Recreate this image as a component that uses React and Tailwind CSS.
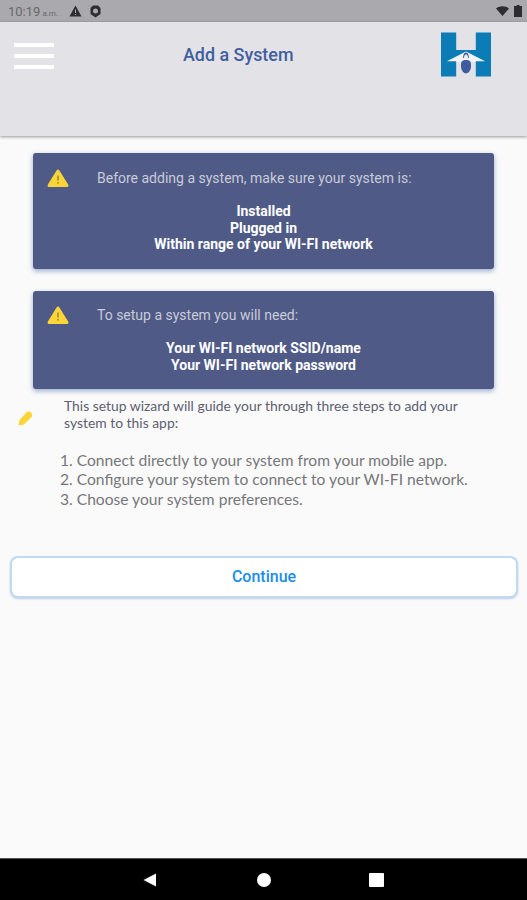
import React from 'react';

const WarningIcon = () => (
  <svg width="22" height="19" viewBox="0 0 22 19" className="shrink-0">
    <path d="M11 2 L20 16.5 H2 Z" fill="#fbd438" stroke="#fbd438" strokeWidth="3" strokeLinejoin="round" />
    <rect x="10.2" y="6.5" width="1.6" height="5" fill="#a08a3a" />
    <rect x="10.2" y="13" width="1.6" height="1.6" fill="#a08a3a" />
  </svg>
);

const Logo = () => (
  <svg width="50" height="45" viewBox="0 0 51 45">
    <path d="M0 0 H15.500 V18 H35.500 V0 H51 V45 H35.500 V29 H15.500 V45 H0 Z" fill="#0b7cb5" />
    <path d="M6 29.500 L25.500 19.500 L45 29.500 H35.500 V30 H15.500 V29.500 Z" fill="#f2f3f6" />
    <path d="M22.500 26 C22.500 22.500 24 20.500 25.500 20.500 C27 20.500 28.500 22.500 28.500 26 L27.500 26 C27.500 23.500 26.500 22.500 25.500 22.500 C24.500 22.500 23.500 23.500 23.500 26 Z" fill="#3f5c9e" />
    <path d="M21 30 C22 27.500 29 27.500 30 30 C31.500 34 30.500 41.500 25.500 42 C20.500 41.500 19.500 34 21 30 Z" fill="#3f5c9e" />
  </svg>
);

const InfoCard = ({ title, lines, className }) => (
  <div className={`mx-[33px] rounded-[3px] bg-[#4f5a86] shadow-[0_2px_5px_rgba(60,90,160,0.5)] ${className}`}>
    <div className="flex items-center pl-[14px]">
      <WarningIcon />
      <p className="ml-[28px] text-[14px] leading-[17px] text-[#c9cbd8]">{title}</p>
    </div>
    <div className="mt-[15px] text-center text-[14px] font-bold leading-[16.500px] text-white">
      {lines.map((line) => (
        <p key={line}>{line}</p>
      ))}
    </div>
  </div>
);

const steps = [
  '1. Connect directly to your system from your mobile app.',
  '2. Configure your system to connect to your WI-FI network.',
  '3. Choose your system preferences.',
];

export default function App() {
  return (
    <div className="flex h-[900px] w-[527px] flex-col overflow-hidden bg-[#fafafa] font-['Roboto',sans-serif]">
      {/* Status bar */}
      <div className="flex h-[22px] shrink-0 items-center justify-between bg-[#aaa9ad] pl-[8px] pr-[5px]">
        <div className="flex items-center">
          <span className="mt-[1px] text-[13px] text-[#68686c]">
            10:19<span className="ml-[2px] text-[8px]">a.m.</span>
          </span>
          <svg width="13" height="12" viewBox="0 0 13 12" className="ml-[11px]">
            <path d="M6.500 0.500 L12.500 11.500 H0.500 Z" fill="#2e2e30" />
            <rect x="6" y="4.500" width="1" height="3.500" fill="#aaa9ad" />
            <rect x="6" y="9" width="1" height="1" fill="#aaa9ad" />
          </svg>
          <svg width="11" height="13" viewBox="0 0 11 13" className="ml-[8px]">
            <path d="M3 0.500 H8 L10.500 3 V9 L5.500 12.500 L0.500 9 V3 Z" fill="#2e2e30" />
            <circle cx="5.500" cy="6" r="2.500" fill="#aaa9ad" />
          </svg>
        </div>
        <div className="flex items-center gap-[5px]">
          <svg width="13" height="10" viewBox="0 0 13 10">
            <path d="M0 2.500 C3.500 -0.500 9.500 -0.500 13 2.500 L6.500 10 Z" fill="#2e2e30" />
          </svg>
          <svg width="8" height="12" viewBox="0 0 8 12">
            <path d="M2.500 0 H5.500 V1 H8 V12 H0 V1 H2.500 Z" fill="#2e2e30" />
          </svg>
        </div>
      </div>

      {/* Header */}
      <div className="h-[114px] shrink-0 bg-[#e3e2e7] shadow-[0_1px_3px_rgba(0,0,0,0.4)]">
        <div className="flex items-start pl-[14px] pr-[36px] pt-[10px]">
          <div className="mt-[11px] flex w-[40px] flex-col gap-[7.500px]">
            <div className="h-[3.500px] bg-white" />
            <div className="h-[3.500px] bg-white" />
            <div className="h-[3.500px] bg-white" />
          </div>
          <h1 className="ml-[129px] mt-[12px] text-[17.900px] font-medium leading-[22px] text-[#3f5f9f]">Add a System</h1>
          <div className="ml-auto">
            <Logo />
          </div>
        </div>
      </div>

      {/* Content */}
      <div className="flex-1 pt-[17px]">
        <InfoCard
          className="h-[116px] pt-[16px]"
          title="Before adding a system, make sure your system is:"
          lines={['Installed', 'Plugged in', 'Within range of your WI-FI network']}
        />
        <InfoCard
          className="mt-[22px] h-[98px] pt-[15px]"
          title="To setup a system you will need:"
          lines={['Your WI-FI network SSID/name', 'Your WI-FI network password']}
        />

        <div className="mt-[9px] flex items-center pl-[18px] pr-[40px]">
          <svg width="15" height="15" viewBox="0 0 15 15" className="mt-[7px] shrink-0">
            <path d="M0.500 14.500 L1.500 9 L8.500 1.500 C9.500 0.500 11.500 0 13 1.500 C14.500 3 14.500 5 13.500 6 L6 13.500 Z" fill="#fbd438" />
          </svg>
          <p className="ml-[31px] font-['Lato',sans-serif] text-[13.900px] leading-[16.500px] text-[#5d6070]">
            This setup wizard will guide your through three steps to add your system to this app:
          </p>
        </div>

        <div className="mt-[20px] pl-[60px] font-['Lato',sans-serif] text-[15.600px] leading-[19.300px] text-[#77777a]">
          {steps.map((step) => (
            <p key={step}>{step}</p>
          ))}
        </div>

        <button className="mx-[10px] mt-[47px] flex h-[42px] w-[508px] items-center justify-center rounded-[8px] border-2 border-[#c0daf2] bg-white text-[16px] font-medium text-[#1a8cec] shadow-[0_1px_2px_rgba(90,140,200,0.4)]">
          Continue
        </button>
      </div>

      {/* Nav bar */}
      <div className="flex h-[42px] shrink-0 items-center justify-center border-t border-[#555555] bg-black">
        <svg width="14" height="14" viewBox="0 0 14 14" className="mr-[100px]">
          <path d="M13 0.500 V13.500 L0.500 7 Z" fill="#fff" />
        </svg>
        <div className="mr-[98px] h-[14px] w-[14px] rounded-full bg-white" />
        <div className="h-[14px] w-[15px] rounded-[1px] bg-white" />
      </div>
    </div>
  );
}
